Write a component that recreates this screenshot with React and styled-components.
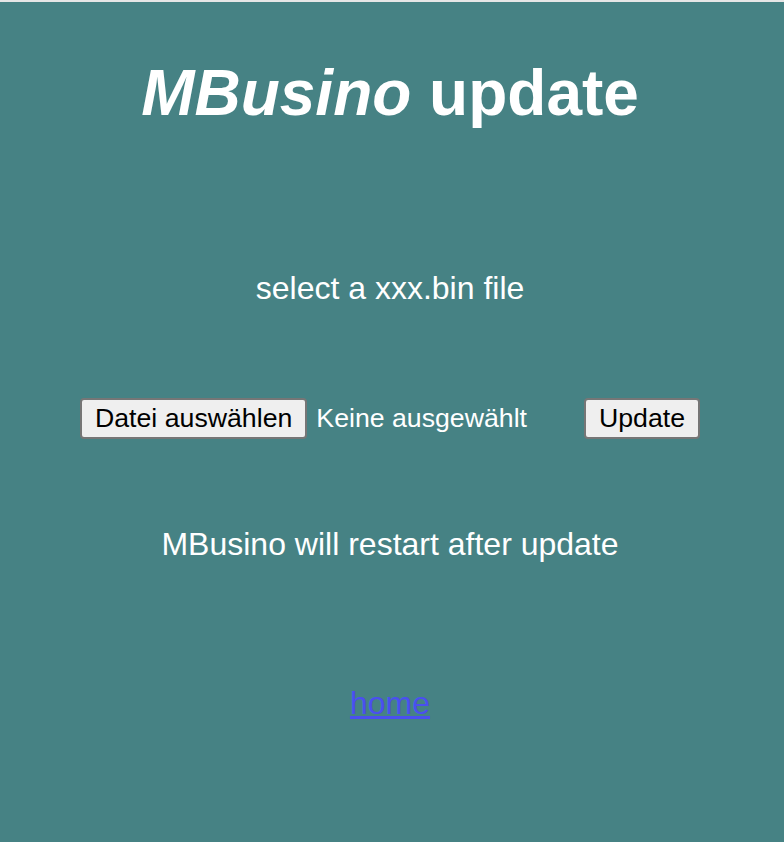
import React from 'react'
import styled, { createGlobalStyle } from "styled-components";

const Global = createGlobalStyle`
  html, body {
    margin: 0;
    padding: 0;
  }
  body {
    background-color: #e6e6e6;
    font-family: "Liberation Sans", Arial, sans-serif;
  }
`;

const Page = styled.div`
  margin-top: 2px;
  min-height: 840px;
  background-color: #468284;
  color: #ffffff;
  overflow: hidden;
`;

const Content = styled.div`
  width: 780px;
  text-align: center;
`;

const Title = styled.h1`
  margin: 54px 0 0;
  font-size: 64px;
  font-weight: bold;
  line-height: 74px;
`;

const Text = styled.p`
  margin: ${(p) => p.top}px 0 0;
  font-size: 32px;
  line-height: 36px;
`;

const UploadRow = styled.form`
  display: flex;
  align-items: center;
  margin: 92px auto 0;
  width: 620px;
`;

const Button = styled.button`
  height: 41px;
  padding: 0 13px;
  font-family: "Liberation Sans", Arial, sans-serif;
  font-size: 26.7px;
  color: #000000;
  background-color: #efefef;
  border: 2px solid #767676;
  border-radius: 4px;
`;

const FileName = styled.span`
  margin-left: 9px;
  font-size: 26.7px;
  color: #ffffff;
`;

const Spacer = styled.div`
  flex: 1;
`;

const HomeLine = styled.div`
  margin-top: 123px;
  font-size: 32px;
  line-height: 36px;
`;

const Home = styled.a`
  color: #4a4ff0;
  text-decoration: underline;
`;

const App = () => {
  return (
    <>
      <Global />
      <Page>
        <Content>
          <Title><i>MBusino</i> update</Title>
          <Text top={140}>select a xxx.bin file</Text>
          <UploadRow onSubmit={(e) => e.preventDefault()}>
            <Button type="button">Datei auswählen</Button>
            <FileName>Keine ausgewählt</FileName>
            <Spacer />
            <Button type="submit">Update</Button>
          </UploadRow>
          <Text top={87}>MBusino will restart after update</Text>
          <HomeLine>
            <Home href="#">home</Home>
          </HomeLine>
        </Content>
      </Page>
    </>
  )
}

export default App
